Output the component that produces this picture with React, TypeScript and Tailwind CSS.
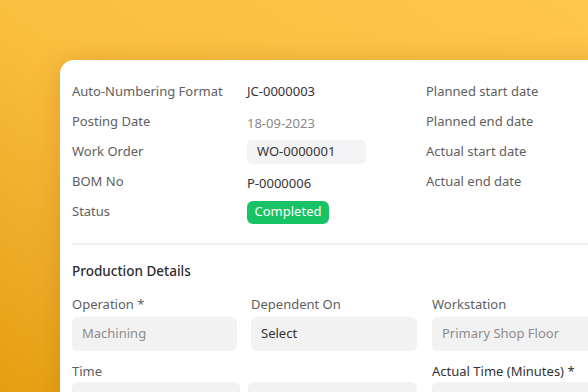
const rows: { label: string; value: React.ReactNode; right: string }[] = [
  { label: "Auto-Numbering Format", value: <span className="text-[#333]">JC-0000003</span>, right: "Planned start date" },
  { label: "Posting Date", value: <span className="text-[#8a8a8a] pt-[3px]">18-09-2023</span>, right: "Planned end date" },
  {
    label: "Work Order",
    value: <span className="flex items-center w-[119px] h-[24px] rounded-[5px] bg-[#f3f3f5] pl-[10px] text-[#333]">WO-0000001</span>,
    right: "Actual start date",
  },
  { label: "BOM No", value: <span className="text-[#333] pt-[3px]">P-0000006</span>, right: "Actual end date" },
  {
    label: "Status",
    value: (
      <span className="flex items-center justify-center w-[82px] h-[23px] rounded-[6px] bg-[#18c365] text-white">Completed</span>
    ),
    right: "",
  },
];

const Input = ({ text, muted, w }: { text?: string; muted?: boolean; w: string }) => (
  <div className={`${w} h-[34px] shrink-0 rounded-[6px] bg-[#f2f2f3] flex items-center px-[10px] ${muted ? "text-[#8c8c8c]" : "text-[#333]"}`}>
    {text}
  </div>
);

export default function App() {
  return (
    <div
      className="w-[588px] h-[392px] overflow-hidden bg-gradient-to-bl from-[#fec64b] via-[#fbbf3f] to-[#e59e0e] pl-[60px] pt-[60px]"
      style={{ fontFamily: '"Noto Sans", "Open Sans", sans-serif' }}
    >
      <div className="w-[580px] h-[360px] bg-white rounded-tl-[14px] shadow-[0_0_24px_rgba(150,90,0,0.25)] pt-[17px] text-[13px] text-[#606060]">
        <div className="pl-[12px]">
          {rows.map((r) => (
            <div key={r.label} className="flex h-[30px] items-center">
              <div className="w-[175px] shrink-0">{r.label}</div>
              <div className="w-[179px] shrink-0 flex">{r.value}</div>
              <div>{r.right}</div>
            </div>
          ))}
        </div>
        <div className="ml-[12px] mt-[16px] h-[2px] bg-[#efefef]" />
        <div className="pl-[12px] pt-[16px]">
          <div className="text-[#2e2e2e] font-medium text-[13.5px] h-[20px] leading-[20px]">Production Details</div>
          <div className="flex gap-[14px] mt-[13px]">
            <div className="flex flex-col">
              <div className="h-[20px] leading-[20px]">Operation *</div>
              <div className="mt-[3px]">
                <Input text="Machining" muted w="w-[165px]" />
              </div>
            </div>
            <div className="flex flex-col">
              <div className="h-[20px] leading-[20px]">Dependent On</div>
              <div className="mt-[3px]">
                <Input text="Select" w="w-[166px]" />
              </div>
            </div>
            <div className="flex flex-col ml-[1px]">
              <div className="h-[20px] leading-[20px]">Workstation</div>
              <div className="mt-[3px]">
                <Input text="Primary Shop Floor" muted w="w-[166px]" />
              </div>
            </div>
          </div>
          <div className="flex mt-[10px]">
            <div className="flex flex-col w-[360px]">
              <div className="h-[20px] leading-[20px]">Time</div>
              <div className="flex gap-[8px] mt-[1px]">
                <Input w="w-[168px]" />
                <Input w="w-[169px]" />
              </div>
            </div>
            <div className="flex flex-col">
              <div className="h-[20px] leading-[20px] text-[#333]">Actual Time (Minutes) *</div>
              <div className="mt-[1px]">
                <Input w="w-[166px]" />
              </div>
            </div>
          </div>
        </div>
      </div>
    </div>
  );
}
